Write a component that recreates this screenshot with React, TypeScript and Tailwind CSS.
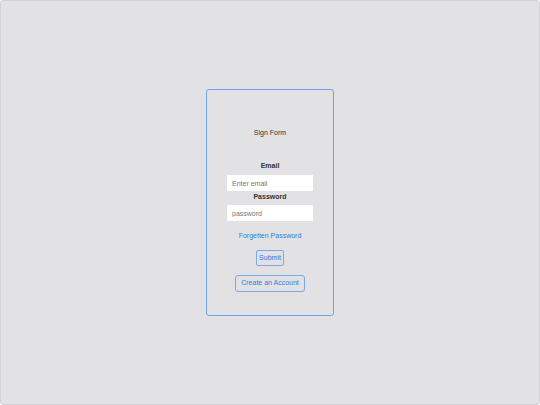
export default function App() {
  return (
    <div
      className="h-[405px] w-[540px] bg-[#e2e2e5] border border-[#d2d2d6] rounded-[3px] flex items-center justify-center"
      style={{ fontFamily: '"Liberation Sans", Arial, sans-serif' }}
    >
      <form className="w-[128px] h-[227px] border border-[#6fa4ec] rounded-[3px] flex flex-col items-center pt-[38px]">
        <h1 className="text-[7px] leading-[10px] text-[#333]">Sign Form</h1>
        <label className="mt-[23px] text-[7px] leading-[10px] font-bold text-[#333]">Email</label>
        <input
          placeholder="Enter email"
          className="mt-[4px] w-[86px] h-[16px] bg-white px-[5px] text-[7px] text-[#333] placeholder:text-[#777] outline-none"
        />
        <label className="mt-[1px] text-[7px] leading-[10px] font-bold text-[#333]">Password</label>
        <input
          type="password"
          placeholder="password"
          className="mt-[3px] w-[86px] h-[16px] bg-white px-[5px] text-[7px] text-[#333] placeholder:text-[#777] outline-none"
        />
        <a className="mt-[10px] text-[7px] leading-[10px] text-[#2a7de1]">Forgetten Password</a>
        <button
          type="button"
          className="mt-[9px] h-[16px] px-[2px] border border-[#7aa9e6] rounded-[2px] text-[7px] text-[#2a7de1]"
        >
          Submit
        </button>
        <button
          type="button"
          className="mt-[9px] h-[17px] px-[5px] border border-[#7aa9e6] rounded-[3px] text-[7px] text-[#2a7de1]"
        >
          Create an Account
        </button>
      </form>
    </div>
  );
}
